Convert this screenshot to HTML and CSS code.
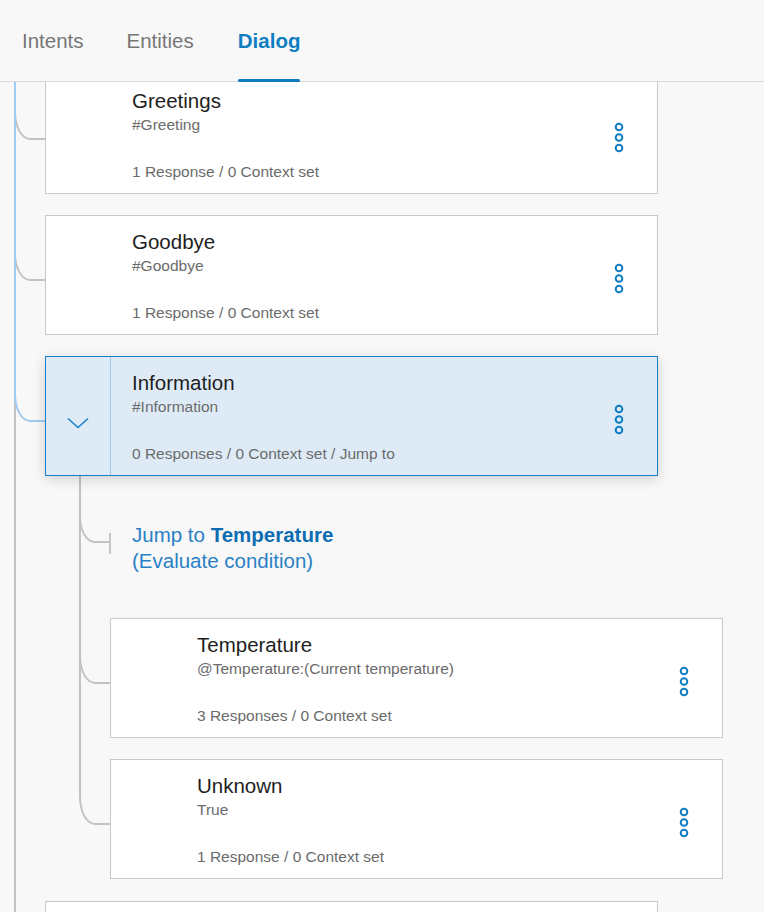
FILE: index.html
```html
<!DOCTYPE html>
<html lang="en">
<head>
<meta charset="utf-8">
<title>Dialog</title>
<link rel="stylesheet" href="styles.css">
</head>
<body>
<header class="tabs">
  <a class="tab">Intents</a>
  <a class="tab">Entities</a>
  <a class="tab active">Dialog</a>
</header>
<main class="canvas">
  <div class="tree">
    <div class="node">
      <span class="elbow"></span>
      <div class="card">
        <div class="card-side"></div>
        <div class="card-body">
          <div class="card-title">Greetings</div>
          <div class="card-cond">#Greeting</div>
          <div class="card-meta">1 Response / 0 Context set</div>
        </div>
        <div class="card-menu"><svg class="kebab" width="10" height="32" viewBox="0 0 10 32"><circle cx="5" cy="5" r="3.3"/><circle cx="5" cy="15.5" r="3.3"/><circle cx="5" cy="26" r="3.3"/></svg></div>
      </div>
    </div>

    <div class="node">
      <span class="elbow"></span>
      <div class="card">
        <div class="card-side"></div>
        <div class="card-body">
          <div class="card-title">Goodbye</div>
          <div class="card-cond">#Goodbye</div>
          <div class="card-meta">1 Response / 0 Context set</div>
        </div>
        <div class="card-menu"><svg class="kebab" width="10" height="32" viewBox="0 0 10 32"><circle cx="5" cy="5" r="3.3"/><circle cx="5" cy="15.5" r="3.3"/><circle cx="5" cy="26" r="3.3"/></svg></div>
      </div>
    </div>

    <div class="node active">
      <span class="trail"></span>
      <span class="elbow"></span>
      <div class="card selected">
        <div class="card-side"><svg class="chevron" width="22" height="12" viewBox="0 0 22 12"><path d="M1 1.5 L11 10.5 L21 1.5"/></svg></div>
        <div class="card-body">
          <div class="card-title">Information</div>
          <div class="card-cond">#Information</div>
          <div class="card-meta">0 Responses / 0 Context set / Jump to</div>
        </div>
        <div class="card-menu"><svg class="kebab" width="10" height="32" viewBox="0 0 10 32"><circle cx="5" cy="5" r="3.3"/><circle cx="5" cy="15.5" r="3.3"/><circle cx="5" cy="26" r="3.3"/></svg></div>
      </div>

      <div class="children">
        <div class="jump">
          <span class="jump-elbow"></span>
          <span class="jump-tick"></span>
          <div>Jump to <strong>Temperature</strong></div>
          <div>(Evaluate condition)</div>
        </div>

        <div class="node">
          <span class="elbow"></span>
          <div class="card">
            <div class="card-side"></div>
            <div class="card-body">
              <div class="card-title">Temperature</div>
              <div class="card-cond">@Temperature:(Current temperature)</div>
              <div class="card-meta">3 Responses / 0 Context set</div>
            </div>
            <div class="card-menu"><svg class="kebab" width="10" height="32" viewBox="0 0 10 32"><circle cx="5" cy="5" r="3.3"/><circle cx="5" cy="15.5" r="3.3"/><circle cx="5" cy="26" r="3.3"/></svg></div>
          </div>
        </div>

        <div class="node">
          <span class="elbow"></span>
          <div class="card">
            <div class="card-side"></div>
            <div class="card-body">
              <div class="card-title">Unknown</div>
              <div class="card-cond">True</div>
              <div class="card-meta">1 Response / 0 Context set</div>
            </div>
            <div class="card-menu"><svg class="kebab" width="10" height="32" viewBox="0 0 10 32"><circle cx="5" cy="5" r="3.3"/><circle cx="5" cy="15.5" r="3.3"/><circle cx="5" cy="26" r="3.3"/></svg></div>
          </div>
        </div>
      </div>
    </div>

    <div class="node">
      <span class="elbow"></span>
      <div class="card"></div>
    </div>
  </div>
</main>
</body>
</html>
```

FILE: styles.css
```css
* { box-sizing: border-box; }

html, body {
  margin: 0;
  height: 100%;
}

body {
  background: #f8f8f8;
  font-family: "Liberation Sans", Arial, sans-serif;
  overflow: hidden;
}

/* ---------- tabs ---------- */
.tabs {
  position: relative;
  z-index: 2;
  height: 82px;
  display: flex;
  gap: 43px;
  padding-left: 22px;
  background: #f8f8f8;
  border-bottom: 1px solid #dadada;
}

.tab {
  position: relative;
  padding-top: 29px;
  font-size: 20.5px;
  line-height: 24px;
  color: #767676;
  text-decoration: none;
}

.tab.active {
  color: #0f7dc2;
  font-weight: bold;
  margin-left: 1px;
}

.tab.active::after {
  content: "";
  position: absolute;
  left: 0;
  right: 0;
  bottom: -1px;
  height: 3px;
  border-radius: 2px;
  background: #0f7dc2;
}

/* ---------- canvas / tree ---------- */
.canvas {
  height: 830px;
  overflow: hidden;
}

.tree {
  position: relative;
  margin: -8px 0 0 14px;
}

.tree::before {
  content: "";
  position: absolute;
  left: 0;
  top: 0;
  bottom: 0;
  width: 2px;
  background: #c2c2c2;
}

.node {
  position: relative;
  padding-left: 31px;
  margin-bottom: 21px;
}

.elbow {
  position: absolute;
  left: 0;
  top: 36px;
  width: 31px;
  height: 30px;
  border-left: 2px solid #c2c2c2;
  border-bottom: 2px solid #c2c2c2;
  border-bottom-left-radius: 16px 28px;
}

.node.active > .elbow {
  border-color: #9fcbf3;
}

.trail {
  position: absolute;
  z-index: 1;
  left: 0;
  top: -600px;
  width: 2px;
  height: 640px;
  background: #9fcbf3;
}

/* ---------- cards ---------- */
.card {
  position: relative;
  display: flex;
  width: 613px;
  height: 120px;
  background: #fff;
  border: 1px solid #c8c8c8;
}

.card-side {
  width: 65px;
  flex: none;
  display: flex;
  align-items: center;
  justify-content: center;
  padding-top: 13px;
}

.card-body {
  flex: 1;
  min-width: 0;
  display: flex;
  flex-direction: column;
  padding: 14px 0 11px 21px;
}

.card-title {
  font-size: 20.5px;
  line-height: 24px;
  color: #1e1e1e;
}

.card-cond {
  font-size: 15.5px;
  line-height: 24px;
  color: #6b6b6b;
}

.card-meta {
  margin-top: auto;
  font-size: 15.5px;
  line-height: 20px;
  color: #6b6b6b;
}

.card-menu {
  width: 77px;
  flex: none;
  display: flex;
  align-items: center;
  justify-content: center;
  padding-top: 8px;
}

.kebab circle {
  fill: none;
  stroke: #0f7dc2;
  stroke-width: 2;
}

.card.selected {
  z-index: 1;
  background: #deebf7;
  border-color: #1a7fc6;
  box-shadow: 0 3px 12px rgba(0, 0, 0, 0.17);
}

.card.selected .card-side {
  border-right: 1px solid #9cc9f0;
}

.chevron path {
  fill: none;
  stroke: #1a7fc6;
  stroke-width: 1.6;
}

/* ---------- children ---------- */
.children {
  position: relative;
  margin-left: 34px;
  padding-top: 46px;
  padding-bottom: 1px;
}

.children::before {
  content: "";
  position: absolute;
  left: 0;
  top: 0;
  bottom: 84px;
  width: 2px;
  background: #c2c2c2;
}

.children > .node:last-child {
  margin-bottom: 0;
}

.jump {
  position: relative;
  padding-left: 53px;
  margin-bottom: 44px;
  font-size: 20.5px;
  line-height: 26px;
  color: #2a80c5;
}

.jump strong {
  color: #0d6db3;
  font-weight: bold;
}

.jump-elbow {
  position: absolute;
  left: 0;
  top: -9px;
  width: 31px;
  height: 30px;
  border-left: 2px solid #c2c2c2;
  border-bottom: 2px solid #c2c2c2;
  border-bottom-left-radius: 16px 26px;
}

.jump-tick {
  position: absolute;
  left: 30px;
  top: 11px;
  width: 2px;
  height: 21px;
  background: #c6c6c6;
}
```
